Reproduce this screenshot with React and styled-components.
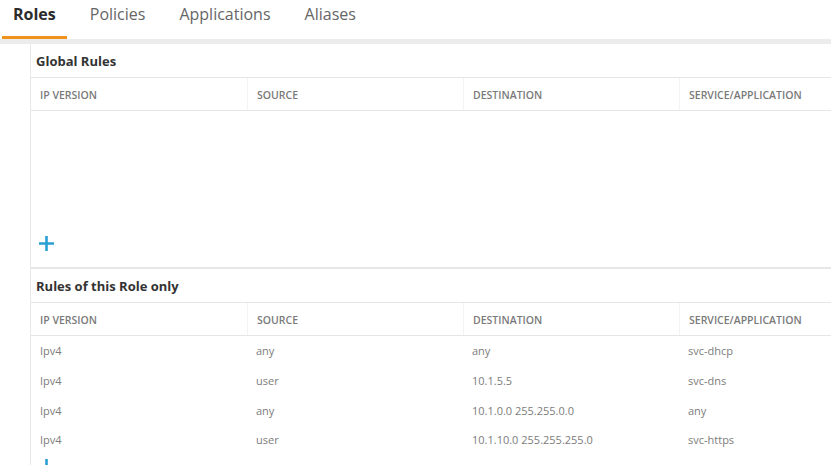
import styled, { createGlobalStyle } from 'styled-components'

const GlobalStyle = createGlobalStyle`
    html, body {
        margin: 0;
        padding: 0;
        background: #ffffff;
        font-family: 'Open Sans', 'Liberation Sans', sans-serif;
        overflow: hidden;
    }
`

const tabs = ['Roles', 'Policies', 'Applications', 'Aliases']
const columns = ['IP Version', 'Source', 'Destination', 'Service/Application']
const roleRules = [
    ['Ipv4', 'any', 'any', 'svc-dhcp'],
    ['Ipv4', 'user', '10.1.5.5', 'svc-dns'],
    ['Ipv4', 'any', '10.1.0.0 255.255.0.0', 'any'],
    ['Ipv4', 'user', '10.1.10.0 255.255.255.0', 'svc-https'],
]

function PlusIcon() {
    return (
        <svg width="17" height="17" viewBox="0 0 17 17">
            <path d="M8.5 1 V16 M1 8.5 H16" stroke="#2a9fd4" strokeWidth="2.6" />
        </svg>
    )
}

function HeaderRow() {
    return (
        <Row $header>
            {columns.map((c) => <Cell key={c} $header>{c}</Cell>)}
        </Row>
    )
}

function App() {
    return (
        <Page>
            <GlobalStyle />
            <TabBar>
                {tabs.map((t, i) => <Tab key={t} $active={i === 0}>{t}</Tab>)}
            </TabBar>
            <Band />
            <Content>
                <SectionTitle>Global Rules</SectionTitle>
                <HeaderRow />
                <EmptyBody>
                    <AddButton><PlusIcon /></AddButton>
                </EmptyBody>

                <SectionTitle>Rules of this Role only</SectionTitle>
                <HeaderRow />
                {roleRules.map((r, i) => (
                    <Row key={i}>
                        {r.map((v, j) => <Cell key={j}>{v}</Cell>)}
                    </Row>
                ))}
                <AddButton $tight><PlusIcon /></AddButton>
            </Content>
        </Page>
    )
}

export default App

const Page = styled.div`
    width: 831px;
    height: 465px;
    overflow: hidden;
`

const TabBar = styled.div`
    display: flex;
    gap: 12px;
    height: 39px;
    padding-left: 2px;
`

const Tab = styled.div`
    display: flex;
    align-items: center;
    padding: 0 11px 8px;
    font-size: 16px;
    font-weight: ${(p) => (p.$active ? 700 : 400)};
    color: ${(p) => (p.$active ? '#2b2b2b' : '#666666')};
    border-bottom: 3px solid ${(p) => (p.$active ? '#f0931e' : 'transparent')};
    box-sizing: border-box;
`

const Band = styled.div`
    height: 5px;
    background: #ececec;
`

const Content = styled.div`
    margin-left: 30px;
    border-left: 1px solid #e8e8e8;
    width: 900px;
`

const SectionTitle = styled.div`
    height: 34px;
    display: flex;
    align-items: center;
    padding-left: 5px;
    font-size: 13px;
    font-weight: 700;
    color: #333333;
    border-bottom: 1px solid #e6e6e6;
    box-sizing: border-box;
`

const Row = styled.div`
    display: grid;
    grid-template-columns: repeat(4, 216px);
    height: ${(p) => (p.$header ? '33px' : '29.7px')};
    border-bottom: ${(p) => (p.$header ? '1px solid #e6e6e6' : 'none')};
    box-sizing: border-box;
`

const Cell = styled.div`
    display: flex;
    align-items: center;
    padding-left: 9px;
    padding-top: ${(p) => (p.$header ? '1px' : '0')};
    font-size: ${(p) => (p.$header ? '10.5px' : '11px')};
    font-weight: ${(p) => (p.$header ? 600 : 400)};
    color: ${(p) => (p.$header ? '#7a7a7a' : '#7c7c7c')};
    text-transform: ${(p) => (p.$header ? 'uppercase' : 'none')};
    border-left: ${(p) => (p.$header ? '1px solid #f3f3f3' : 'none')};

    &:first-child {
        border-left: none;
    }
`

const EmptyBody = styled.div`
    height: 158px;
    display: flex;
    flex-direction: column;
    justify-content: flex-end;
    padding-bottom: 15px;
    box-sizing: border-box;
    border-bottom: 2px solid #e6e6e6;
`

const AddButton = styled.div`
    padding-left: 7px;
    padding-top: ${(p) => (p.$tight ? '3px' : '0')};
    line-height: 0;
`
